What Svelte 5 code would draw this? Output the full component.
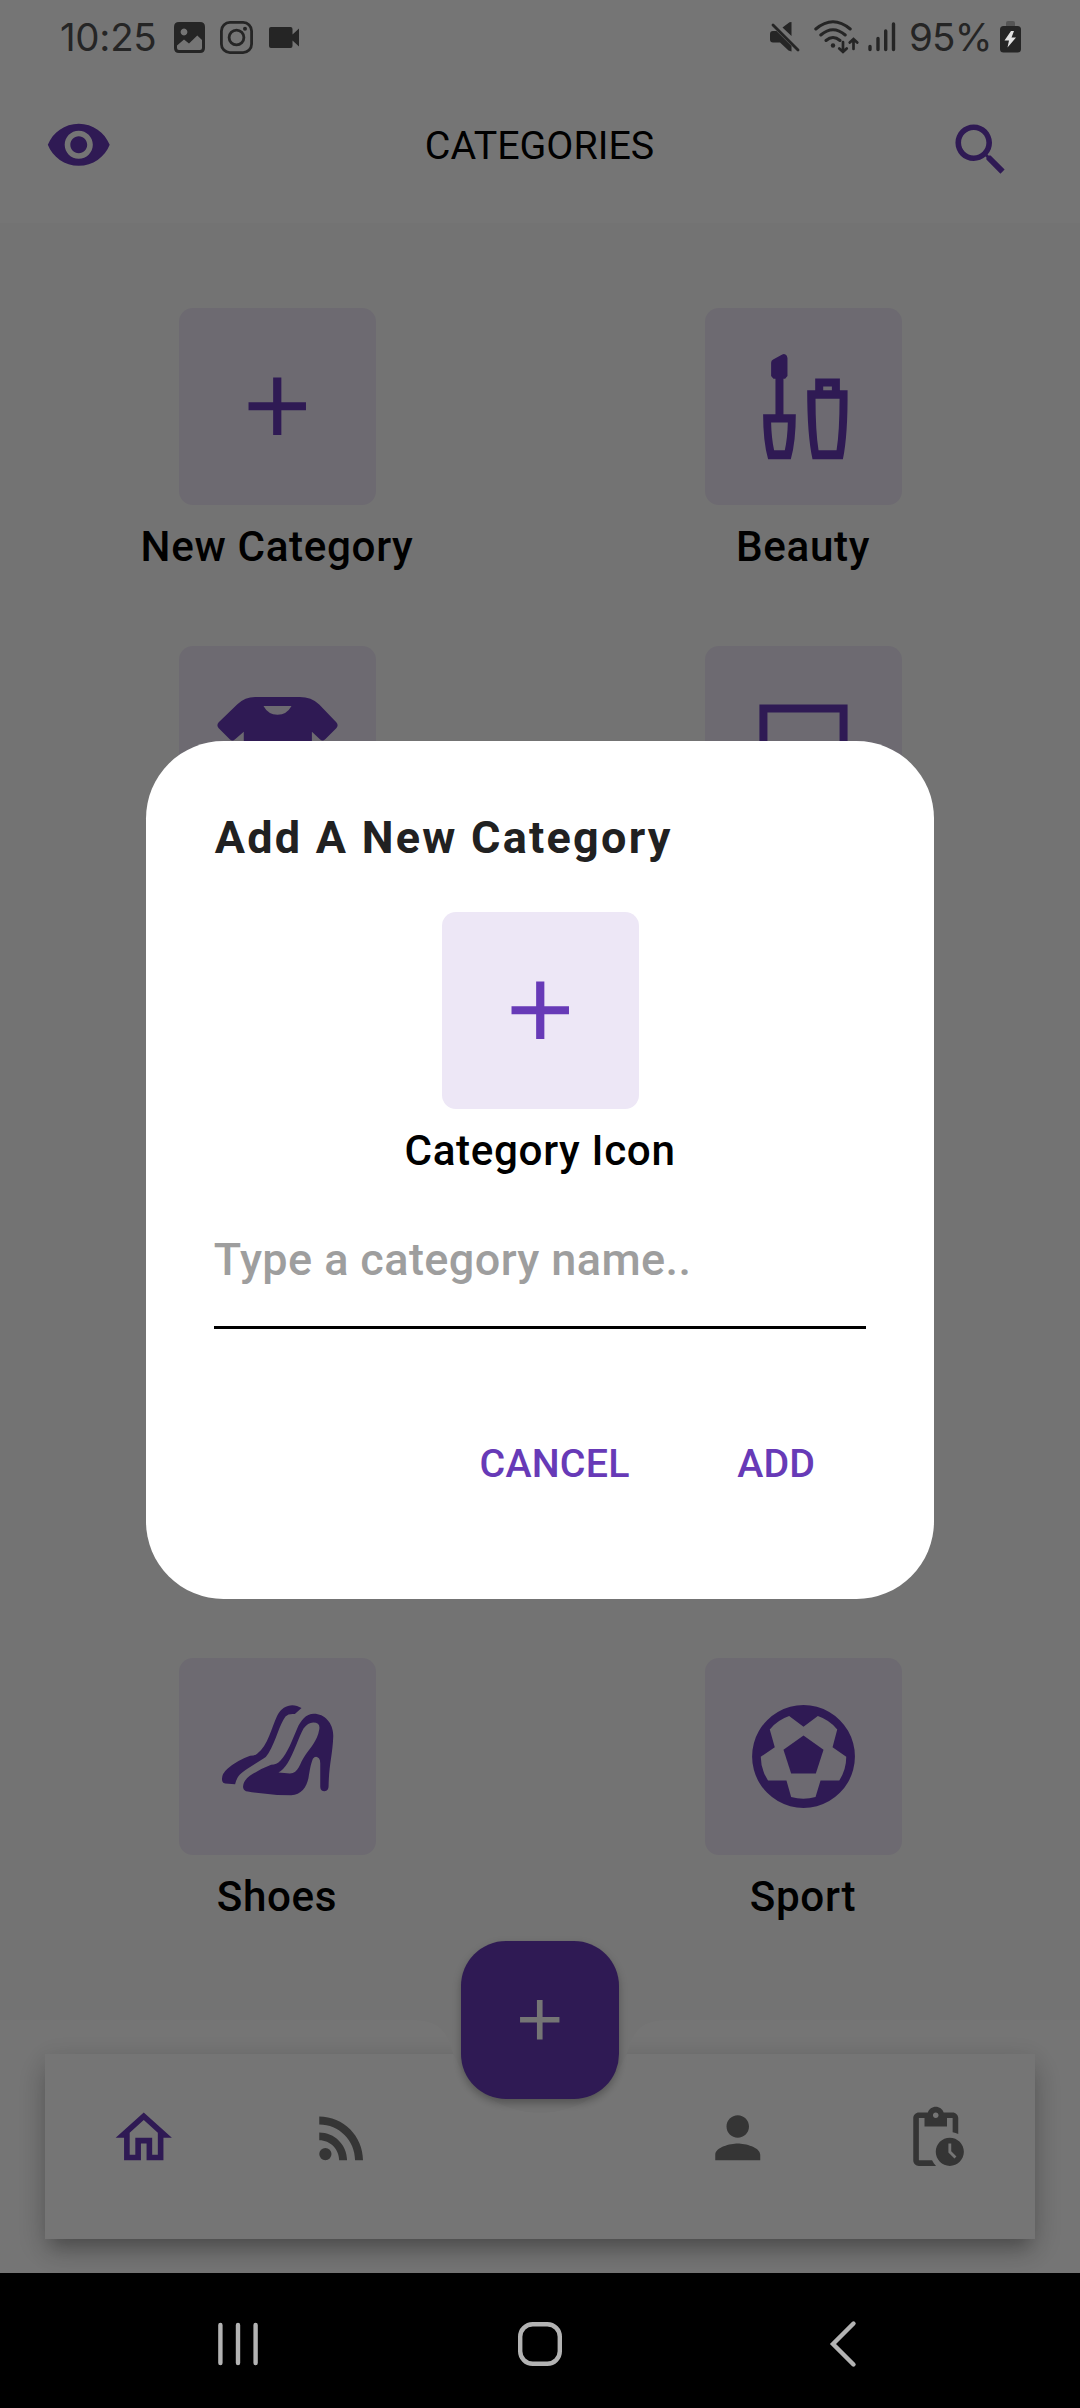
<script>
  const categories = [
    { label: 'New Category', icon: 'add' },
    { label: 'Beauty', icon: 'beauty' },
    { label: '', icon: 'shirt' },
    { label: '', icon: 'laptop' },
    { label: '', icon: '' },
    { label: '', icon: '' },
    { label: '', icon: '' },
    { label: '', icon: '' },
    { label: 'Shoes', icon: 'shoes' },
    { label: 'Sport', icon: 'sport' }
  ];
</script>

{#snippet addIcon(cls)}
  <svg class={cls} viewBox="0 0 24 24"><path d="M19 13h-6v6h-2v-6H5v-2h6V5h2v6h6v2z" /></svg>
{/snippet}

<div class="screen">
  <header class="status">
    <span class="time">10:25</span>
    <svg class="st-image" viewBox="0 0 31 31">
      <path fill-rule="evenodd" d="M5 0H26Q31 0 31 5V26Q31 31 26 31H5Q0 31 0 26V5Q0 0 5 0ZM10 6.6a3.4 3.4 0 1 0 .01 0ZM3 26Q3 28 5 28H26Q28 28 28 26V18L23.300 13.500L15 21.500L10 17.500L3 23.500Z" />
    </svg>
    <svg class="st-insta" viewBox="0 0 33 33" fill="none" stroke="#252525" stroke-width="2.800">
      <rect x="1.400" y="1.400" width="30.200" height="30.200" rx="8.500" />
      <circle cx="16.500" cy="16.500" r="7.400" />
      <circle cx="25" cy="7.800" r="2" fill="#252525" stroke="none" />
    </svg>
    <svg class="st-video" viewBox="0 0 30 21">
      <path d="M2 0H21.500Q23.500 0 23.500 2V7.500L30 1.500V19.500L23.500 13.500V19Q23.500 21 21.500 21H2Q0 21 0 19V2Q0 0 2 0Z" />
    </svg>
    <span class="spacer"></span>
    <svg class="st-mute" viewBox="0 0 30 30">
      <path d="M21.500 0V14L12.500 5.600L19.500 .3ZM0 12Q0 9 3 9H6.500L21.500 24V29.500L18.500 28.500L10 20.500H3Q0 20.500 0 17.500Z" />
      <path d="M3 3L28 28" fill="none" stroke="#252525" stroke-width="2.800" stroke-linecap="round" />
    </svg>
    <svg class="st-wifi" viewBox="0 0 45 34" fill="none" stroke="#252525" stroke-width="3" stroke-linecap="round">
      <path d="M1.800 9Q19 -5.500 36.200 9M6.800 15Q19 4.500 31.200 15M12 20.500Q19 14.500 26 20.500" />
      <circle cx="19" cy="25.500" r="2.200" fill="#252525" stroke="none" />
      <path d="M29 22V32M25.300 28.500L29 32L32.700 28.500M39.500 29V20M35.800 22.500L39.500 19L43.200 22.500" stroke-width="2.700" />
    </svg>
    <svg class="st-signal" viewBox="0 0 28 30" stroke="#252525" stroke-width="3.400" stroke-linecap="round">
      <path d="M2 24.500V27.500M10 16.500V27.500M17.700 9V27.500M25.500 2V27.500" />
    </svg>
    <span class="percent">95%</span>
    <svg class="st-battery" viewBox="0 0 21 32">
      <path d="M6 5.500V2Q6 0 8 0H13Q15 0 15 2V5.500Z" fill="#555" />
      <rect y="5" width="21" height="26.500" rx="3.500" />
      <path d="M11 10L4.500 19.500H9L7.500 26.500L16 16.500H11.500L14 10Z" fill="#e2e2e2" />
    </svg>
  </header>

  <div class="appbar">
    <svg class="ic violet" viewBox="0 0 24 24"><path d="M12 4.500C7 4.500 2.730 7.610 1 12c1.730 4.390 6 7.500 11 7.500s9.270-3.110 11-7.500c-1.730-4.390-6-7.500-11-7.500zM12 17c-2.760 0-5-2.240-5-5s2.240-5 5-5 5 2.240 5 5-2.240 5-5 5zm0-8c-1.660 0-3 1.340-3 3s1.340 3 3 3 3-1.340 3-3-1.340-3-3-3z" /></svg>
    <h1>CATEGORIES</h1>
    <svg class="ic violet search" viewBox="0 0 24 24"><path d="M15.500 14h-.79l-.28-.27C15.410 12.590 16 11.110 16 9.500 16 5.910 13.090 3 9.500 3S3 5.910 3 9.500 5.910 16 9.500 16c1.610 0 3.090-.59 4.230-1.570l.27.28v.79l5 4.990L20.490 19l-4.990-5zm-6 0C7.010 14 5 11.990 5 9.500S7.010 5 9.500 5 14 7.010 14 9.500 11.990 14 9.500 14z" /></svg>
  </div>

  <main class="grid">
    {#each categories as c}
      <div class="cell">
        <div class="tile">
          {#if c.icon === 'add'}
            {@render addIcon('plus')}
          {:else if c.icon === 'beauty'}
            <svg class="art" viewBox="0 0 590 590">
              <path fill-rule="evenodd" d="M198 164Q198 157 204 154L230 140Q239 135 245 143L247 150V204L240 212H235V318H272Q272 400 257 453H189Q174 400 174 318H211V212H205L198 204ZM198 343Q199 390 207 426H239Q247 390 248 343Z" />
              <path fill-rule="evenodd" d="M306 246H330V211H404V246H427Q428 380 413 453H322Q306 380 306 246ZM331 272Q331 370 340 426H394Q403 370 403 272ZM354 235V246H380V235Z" />
            </svg>
          {:else if c.icon === 'shirt'}
            <svg class="art" viewBox="0 0 590 590">
              <path fill-rule="evenodd" d="M228 153H362Q396 153 420 175L471 228Q479 237 471 246L438 279Q430 287 422 279L398 257V440H194V257L168 279Q160 287 152 279L119 246Q111 237 119 228L174 175Q198 153 228 153ZM253 180Q267 206 295 206T337 180Z" />
            </svg>
          {:else if c.icon === 'laptop'}
            <svg class="art" viewBox="0 0 590 590"><path fill-rule="evenodd" d="M163 175H427V380H163ZM187 199V356H403V199ZM130 390H460V415H130Z" /></svg>
          {:else if c.icon === 'shoes'}
            <svg class="art" viewBox="0 0 590 590">
              <path d="M367 150C343 134 311 139 294 173C277 208 267 262 234 287Q227 293 213 293Q176 306 146 331Q124 350 130 370Q131 375 138 376L168 378C174 353 187 343 206 331L252 302Q262 296 268 285C292 245 300 200 319 175Q328 166 347 168Z" />
              <path fill-rule="evenodd" d="M423 386Q424 399 436 399Q448 398 448 384C449 320 460 290 462 235C463 195 436 167 404 167C380 167 364 188 354 211C340 244 325 285 304 307Q292 320 276 320Q242 333 212 353Q190 370 192 388Q194 399 206 400Q270 411 336 411C366 410 383 386 388 358C392 335 394 320 401 302Q409 290 419 300Q423 304 423 315ZM402 193Q424 193 420 214C414 249 393 269 378 291C360 316 359 345 332 346L298 343Q313 334 325 315C344 285 359 236 373 211Q386 193 402 193Z" />
            </svg>
          {:else if c.icon === 'sport'}
            <svg class="art" viewBox="0 0 590 590">
              <path fill-rule="evenodd" d="M295 141A154 154 0 1 0 295.100 141ZM252 174L295 206L338 174A130 130 0 0 1 396 214L382 267L423 296A128 128 0 0 1 402 367H346L331 416A128 128 0 0 1 258 416L244 367H189A128 128 0 0 1 167 296L209 267L194 214A130 130 0 0 1 252 174Z" />
              <path d="M295 232L355 275L332 346H258L235 275Z" />
            </svg>
          {/if}
        </div>
        {#if c.label}<span class="label">{c.label}</span>{/if}
      </div>
    {/each}
  </main>

  <div class="dock">
    <div class="bar">
      <nav class="card">
        <svg class="ic violet" viewBox="0 0 24 24"><path d="M12 5.690l5 4.500V18h-2v-6H9v6H7v-7.810l5-4.500M12 3L2 12h3v8h6v-6h2v6h6v-8h3L12 3z" /></svg>
        <svg class="ic" viewBox="0 0 24 24"><circle cx="6.180" cy="17.820" r="2.180" /><path d="M4 4.440v2.830c7.030 0 12.730 5.700 12.730 12.730h2.830c0-8.590-6.970-15.560-15.560-15.560zm0 5.660v2.830c3.900 0 7.070 3.170 7.070 7.070h2.830c0-5.470-4.430-9.900-9.900-9.900z" /></svg>
        <span></span>
        <svg class="ic" viewBox="0 0 24 24"><path d="M12 12c2.210 0 4-1.790 4-4s-1.790-4-4-4-4 1.790-4 4 1.790 4 4 4zm0 2c-2.670 0-8 1.340-8 4v2h16v-2c0-2.660-5.330-4-8-4z" /></svg>
        <svg class="ic" viewBox="0 0 24 24"><path d="M17 12c-2.760 0-5 2.240-5 5s2.240 5 5 5 5-2.240 5-5-2.240-5-5-5zm1.650 7.350L16.500 17.200V14h1v2.790l1.850 1.850-.7.710zM18 3h-3.180C14.400 1.840 13.300 1 12 1s-2.400.84-2.820 2H6c-1.100 0-2 .9-2 2v15c0 1.100.9 2 2 2h6.110c-.59-.57-1.070-1.250-1.420-2H6V5h2v3h8V5h2v5.080c.71.1 1.380.31 2 .6V5c0-1.100-.9-2-2-2zm-6 2c-.55 0-1-.45-1-1s.45-1 1-1 1 .45 1 1-.45 1-1 1z" /></svg>
      </nav>
    </div>
    <button class="fab" aria-label="Add">{@render addIcon('ic')}</button>
  </div>

  <div class="scrim">
    <div class="dialog">
      <h2>Add A New Category</h2>
      <div class="picker">
        <div class="tile">{@render addIcon('plus')}</div>
        <span class="label">Category Icon</span>
      </div>
      <div class="field">Type a category name..</div>
      <div class="actions">
        <span class="cancel">CANCEL</span>
        <span class="add">ADD</span>
      </div>
    </div>
  </div>

  <footer class="sysnav">
    <svg viewBox="0 0 48 48"><path d="M6.400 5V43M24 5V43M41.600 5V43" /></svg>
    <svg viewBox="0 0 48 48"><rect x="4.200" y="4.200" width="39.600" height="39.600" rx="12.500" /></svg>
    <svg viewBox="0 0 48 48"><path d="M36.500 3.500L16 24L36.500 44.500" /></svg>
  </footer>
</div>

<style>
  :global(body) { margin: 0; background: #000; }
  * { box-sizing: border-box; }
  .screen {
    position: relative;
    width: 1080px;
    height: 2408px;
    overflow: hidden;
    display: flex;
    flex-direction: column;
    background: #fafafa;
    color: #000;
    font-family: Roboto, "Liberation Sans", sans-serif;
  }
  svg { display: block; flex: none; }
  h1, h2 { margin: 0; }

  .status {
    position: relative;
    z-index: 2;
    flex: none;
    height: 66px;
    padding: 0 59px 0 59px;
    display: flex;
    align-items: flex-start;
    color: #252525;
    fill: #252525;
    font-family: Inter, Roboto, sans-serif;
    font-size: 38.500px;
    line-height: 46px;
  }
  .time { width: 115px; padding: 14px 0 0 1px; letter-spacing: -0.300px; white-space: nowrap; }
  .st-image { width: 31px; height: 31px; margin-top: 22px; }
  .st-insta { width: 33px; height: 33px; margin: 21px 0 0 15px; }
  .st-video { width: 30px; height: 21px; margin: 27px 0 0 15.500px; }
  .spacer { flex: 1; }
  .st-mute { width: 30px; height: 30px; margin-top: 22px; }
  .st-wifi { width: 45px; height: 34px; margin: 20px 0 0 14px; }
  .st-signal { width: 28px; height: 30px; margin: 22px 0 0 9px; }
  .percent { width: 91px; margin-left: 13px; padding-top: 14px; letter-spacing: -0.800px; white-space: nowrap; }
  .st-battery { width: 21px; height: 32px; margin-top: 21px; }

  .appbar {
    flex: none;
    box-sizing: content-box;
    width: 970px;
    height: 157px;
    margin-top: -66px;
    padding: 66px 65px 0 45px;
    display: flex;
    align-items: center;
    justify-content: space-between;
    background: #fff;
  }
  .appbar h1 {
    margin: 2px 0 0 19px;
    font-size: 39.375px;
    line-height: 50px;
    font-weight: 400;
  }
  .ic { width: 67.500px; height: 67.500px; fill: #757575; }
  .violet { fill: #673ab7; }
  .search { margin-top: 11px; }

  .grid {
    flex: 1;
    min-height: 0;
    overflow: hidden;
    padding: 85px 14px 0;
    display: grid;
    grid-template-columns: 1fr 1fr;
    grid-auto-rows: 337.500px;
    align-content: start;
  }
  .cell, .picker { display: flex; flex-direction: column; align-items: center; }
  .tile {
    width: 197px;
    height: 197px;
    border-radius: 14px;
    background: #ede7f6;
    display: flex;
    align-items: center;
    justify-content: center;
  }
  .tile :global(.plus) { width: 98.500px; height: 98.500px; fill: #673ab7; }
  .art { width: 197px; height: 197px; fill: #673ab7; }
  .label {
    margin-top: 16.500px;
    font-size: 42.190px;
    line-height: 50px;
    font-weight: 500;
    letter-spacing: 0.650px;
  }

  .dock { position: relative; flex: none; height: 253px; }
  .bar {
    height: 253px;
    padding: 33.750px 45px;
    background: #fff;
    clip-path: path("M0 0H405C430 0 441 3 449.600 22A93 93 0 0 0 630.400 22C639 3 650 0 675 0H1080V253H0Z");
  }
  .card {
    height: 185.600px;
    padding-bottom: 17px;
    display: grid;
    grid-template-columns: repeat(5, 1fr);
    align-items: center;
    justify-items: center;
    background: #fff;
    box-shadow: 0 14px 14px -8px rgba(0, 0, 0, 0.16), 0 14px 26px 0 rgba(0, 0, 0, 0.16), 0 6px 28px 2px rgba(0, 0, 0, 0.1);
  }
  .fab {
    position: absolute;
    left: 461.250px;
    top: -78.750px;
    width: 157.500px;
    height: 157.500px;
    padding: 0;
    border: 0;
    border-radius: 45px;
    display: flex;
    align-items: center;
    justify-content: center;
    background: #673ab7;
    box-shadow: 0 4px 8px rgba(0, 0, 0, 0.28);
  }
  .fab :global(.ic) { fill: #fff; }

  .scrim {
    position: absolute;
    inset: 0 0 135px;
    padding-top: 66px;
    display: flex;
    align-items: center;
    justify-content: center;
    background: rgba(0, 0, 0, 0.54);
  }
  .dialog {
    width: 787.500px;
    height: 858px;
    padding: 67px 67.500px 0;
    border-radius: 77.500px;
    background: #fff;
  }
  .dialog h2 {
    margin-left: 1px;
    color: #212121;
    font-size: 45px;
    line-height: 60px;
    font-weight: 700;
    letter-spacing: 2.250px;
  }
  .picker { margin-top: 44.500px; }
  .field {
    margin-top: 54px;
    height: 99px;
    border-bottom: 3px solid #000;
    color: #9e9e9e;
    font-size: 45px;
    line-height: 60px;
    font-weight: 500;
    letter-spacing: 0.400px;
  }
  .actions {
    margin-top: 110px;
    padding-right: 51px;
    display: flex;
    justify-content: flex-end;
    gap: 107.500px;
    color: #673ab7;
    font-size: 39.375px;
    line-height: 50px;
    font-weight: 500;
    letter-spacing: 0.200px;
  }

  .sysnav {
    flex: none;
    height: 135px;
    padding: 6px 215px 0 214px;
    display: flex;
    align-items: center;
    justify-content: space-between;
    background: #000;
  }
  .sysnav svg {
    width: 48px;
    height: 48px;
    fill: none;
    stroke: #b3b3b3;
    stroke-width: 4.400px;
    stroke-linecap: round;
  }
</style>
